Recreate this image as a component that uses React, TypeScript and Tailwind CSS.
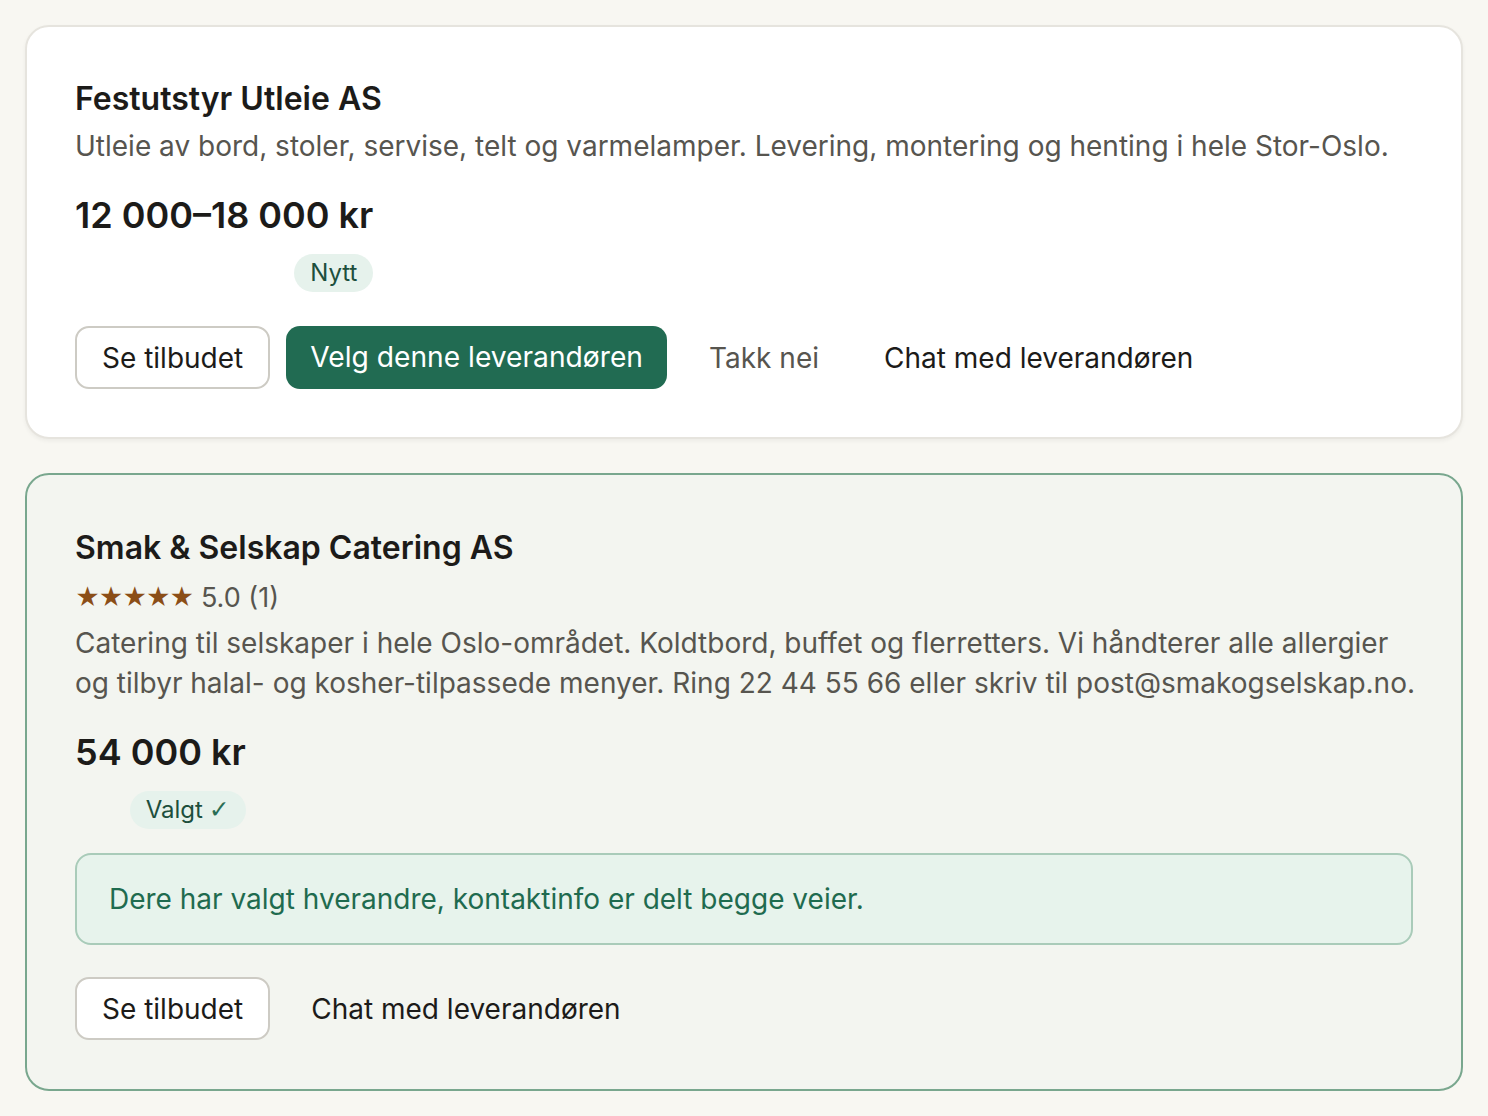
const font = { fontFamily: 'Inter, "Noto Sans", sans-serif' };

function OutlineButton({ children }: { children: string }) {
  return (
    <button
      type="button"
      className="h-[63px] rounded-[14px] border-2 border-[#cdcbc4] bg-white px-[25px] text-[28px] text-[#1c1b19]"
    >
      {children}
    </button>
  );
}

function TextButton({ children, muted, gap }: { children: string; muted?: boolean; gap: string }) {
  return (
    <button
      type="button"
      className={`h-[63px] text-[28px] ${gap} ${muted ? 'text-[#57554f]' : 'text-[#1c1b19]'}`}
    >
      {children}
    </button>
  );
}

function Price({ amount, badge, check }: { amount: string; badge: string; check?: boolean }) {
  return (
    <div className="mt-[24px] inline-flex flex-col items-end">
      <p className="text-[36px] font-semibold leading-[50px] text-[#1c1b19]">{amount}</p>
      <span className="mt-[14px] rounded-full bg-[#e6f2ec] px-[16px] text-[24px] leading-[38px] text-[#1d4f3d]">
        {badge}
        {check && <span className="ml-[6px] font-['DejaVu_Sans'] text-[25px] text-[#2a6e55]">✓</span>}
      </span>
    </div>
  );
}

export default function App() {
  return (
    <div className="min-h-[1116px] bg-[#f8f7f2] p-[25px]" style={font}>
      <div className="flex flex-col gap-[34px]">
        <section className="rounded-[24px] border-2 border-[#e6e4de] bg-white px-[48px] pb-[48px] pt-[52px] shadow-[0_2px_4px_rgba(0,0,0,0.05)]">
          <h2 className="text-[32px] font-semibold leading-[40px] text-[#1c1b19]">Festutstyr Utleie AS</h2>
          <p className="mt-[7px] text-[28px] leading-[40px] text-[#57554f]">
            Utleie av bord, stoler, servise, telt og varmelamper. Levering, montering og henting i hele Stor-Oslo.
          </p>
          <Price amount="12 000–18 000 kr" badge="Nytt" />
          <div className="mt-[34px] flex items-center">
            <OutlineButton>Se tilbudet</OutlineButton>
            <button
              type="button"
              className="ml-[16px] h-[63px] rounded-[14px] bg-[#216b52] px-[24px] text-[28.2px] text-white"
            >
              Velg denne leverandøren
            </button>
            <TextButton muted gap="ml-[42px]">Takk nei</TextButton>
            <TextButton gap="ml-[65px]">Chat med leverandøren</TextButton>
          </div>
        </section>

        <section className="rounded-[24px] border-2 border-[#79a78e] bg-[#f3f5f0] px-[48px] pb-[49px] pt-[53px]">
          <h2 className="text-[32px] font-semibold leading-[40px] text-[#1c1b19]">Smak &amp; Selskap Catering AS</h2>
          <div className="mt-[10px] flex items-center gap-[8px] leading-[40px]">
            <span className="text-[24px] tracking-[-1.5px] text-[#8b4e17]">★★★★★</span>
            <span className="text-[27px] text-[#57554f]">5.0 (1)</span>
          </div>
          <p className="mr-[-8px] mt-[5px] text-[28px] leading-[40px] text-[#57554f]">
            Catering til selskaper i hele Oslo-området. Koldtbord, buffet og flerretters. Vi håndterer alle allergier og tilbyr halal- og kosher-tilpassede menyer. Ring 22 44 55 66 eller skriv til post@smakogselskap.no.
          </p>
          <Price amount="54 000 kr" badge="Valgt" check />
          <div className="mt-[24px] rounded-[16px] border-2 border-[#a9cbb9] bg-[#e7f3ec] px-[32px] py-[24px] text-[28px] leading-[40px] text-[#1f6b4f]">
            Dere har valgt hverandre, kontaktinfo er delt begge veier.
          </div>
          <div className="mt-[32px] flex items-center">
            <OutlineButton>Se tilbudet</OutlineButton>
            <TextButton gap="ml-[41px]">Chat med leverandøren</TextButton>
          </div>
        </section>
      </div>
    </div>
  );
}
